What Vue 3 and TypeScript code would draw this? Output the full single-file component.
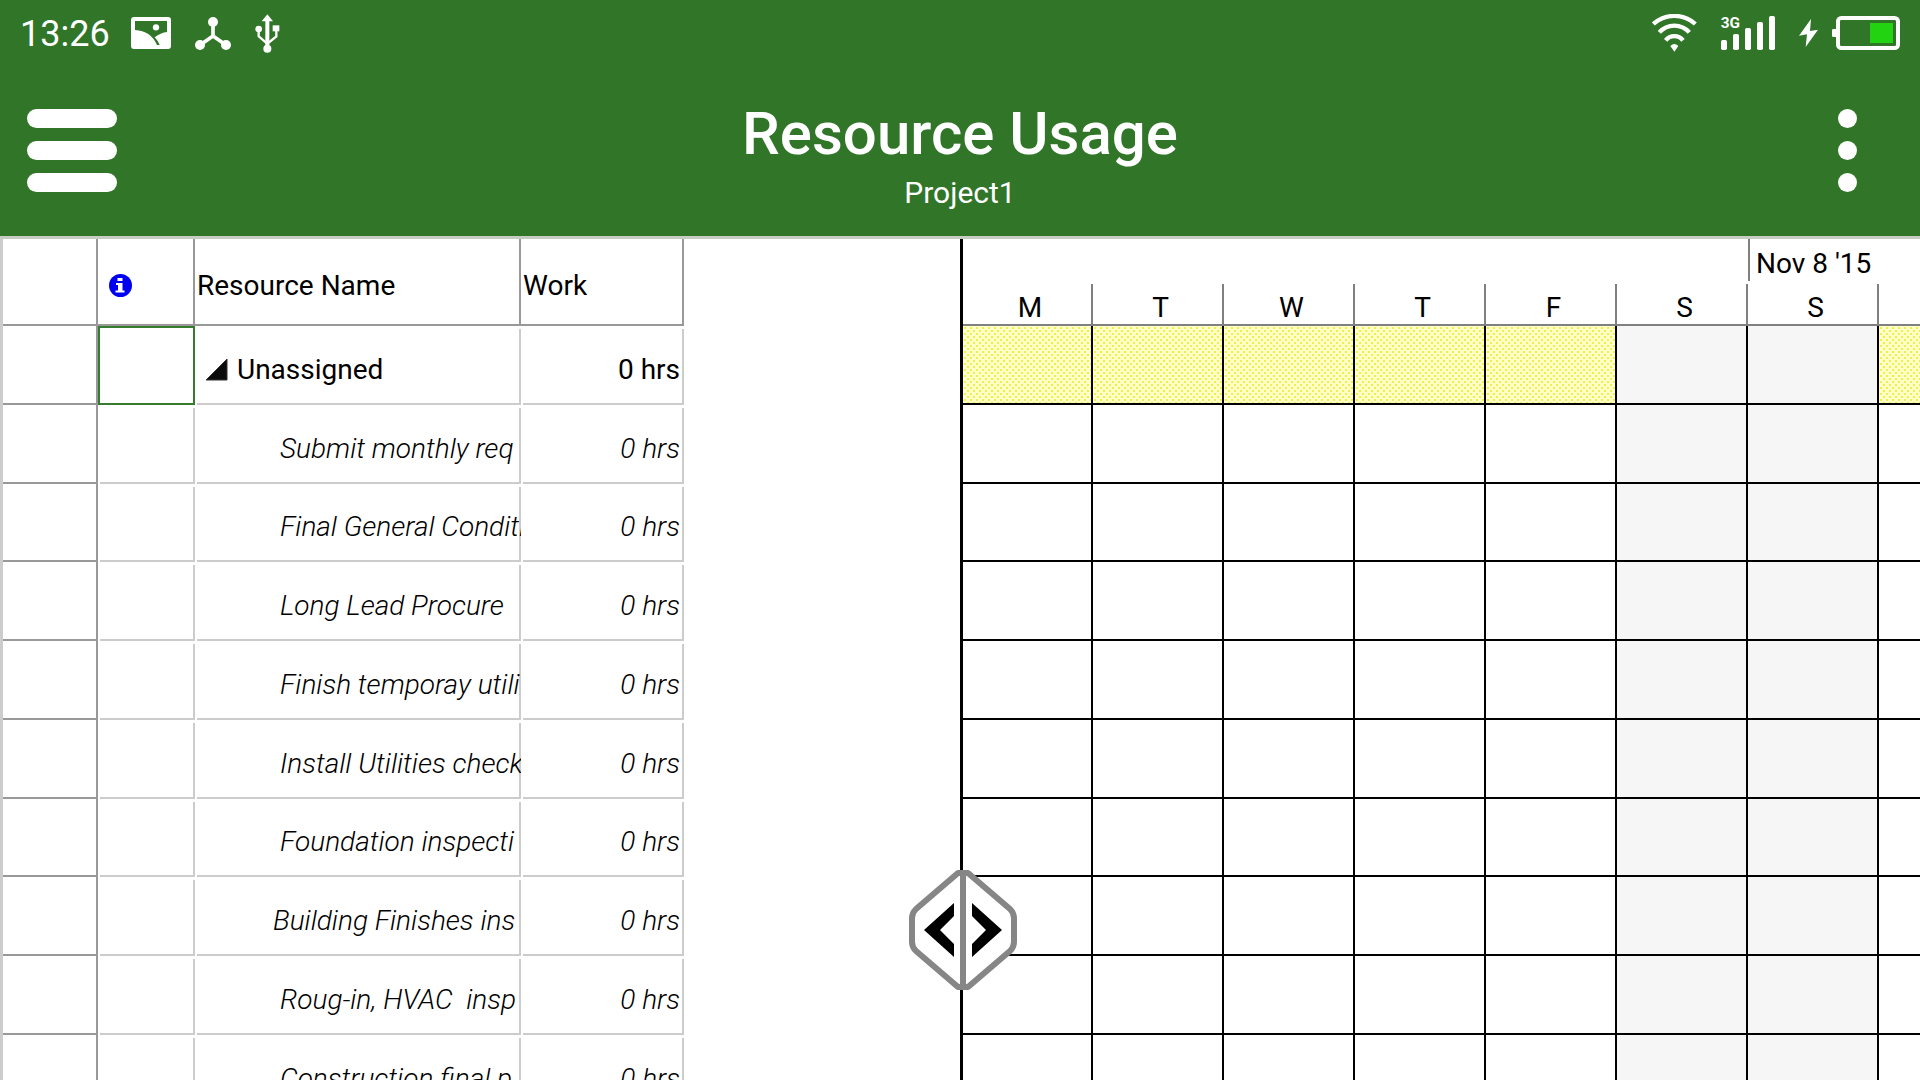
<script setup lang="ts">
interface Assignment {
  name: string
  work: string
  parent?: boolean
  wide?: boolean
}

const rows: Assignment[] = [
  { name: 'Unassigned', work: '0 hrs', parent: true },
  { name: 'Submit monthly req', work: '0 hrs' },
  { name: 'Final General Conditi', work: '0 hrs' },
  { name: 'Long Lead Procure', work: '0 hrs' },
  { name: 'Finish temporay utili', work: '0 hrs' },
  { name: 'Install Utilities checko', work: '0 hrs' },
  { name: 'Foundation inspecti', work: '0 hrs' },
  { name: 'Building Finishes ins', work: '0 hrs', wide: true },
  { name: 'Roug-in, HVAC  insp', work: '0 hrs' },
  { name: 'Construction final p', work: '0 hrs' },
]

const days: string[] = ['M', 'T', 'W', 'T', 'F', 'S', 'S', '']
const isWeekend = (index: number): boolean => index === 5 || index === 6
</script>

<template>
  <div class="app">
    <header class="top">
      <div class="status">
        <time class="clock">13:26</time>
        <svg class="icon" width="40" height="32" viewBox="393 51 120 96" aria-hidden="true">
          <rect x="393" y="51" width="120" height="96" rx="9" fill="#fff" />
          <path d="M405 63H501V96Q482 98 464 112Q473 121 479 135H471Q452 92 405 90Z" fill="#307528" />
          <circle cx="468" cy="82" r="9.5" fill="#fff" />
        </svg>
        <svg class="icon" width="36" height="33" viewBox="585 48 108 99" aria-hidden="true">
          <path d="M639 63V105L600 132M639 105L678 132" fill="none" stroke="#fff" stroke-width="11" />
          <g fill="#fff"><circle cx="639" cy="63" r="15" /><circle cx="600" cy="132" r="15" /><circle cx="678" cy="132" r="15" /></g>
        </svg>
        <svg class="icon" width="25" height="39" viewBox="764 41 75 117" aria-hidden="true">
          <path d="M801 60V140" stroke="#fff" stroke-width="12" />
          <path d="M775 86V108L801 130L828 108V88" fill="none" stroke="#fff" stroke-width="7" />
          <path d="M801 42L818 63H784Z" fill="#fff" />
          <circle cx="801" cy="145" r="12" fill="#fff" /><circle cx="775" cy="86" r="10" fill="#fff" />
          <rect x="817" y="75" width="20" height="18" fill="#fff" />
        </svg>
        <span class="spacer"></span>
        <svg class="icon" width="45" height="38" viewBox="98 42 135 114" aria-hidden="true">
          <g fill="none" stroke="#fff" stroke-width="13">
            <path d="M102 72A94 94 0 0 1 228 72" />
            <path d="M120 97A60 60 0 0 1 210 97" />
            <path d="M139 121A33 33 0 0 1 191 121" />
          </g>
          <path d="M153 138Q165 126 177 138L165 155Z" fill="#fff" />
        </svg>
        <svg class="icon signal" width="54" height="34" viewBox="303 48 162 102" aria-hidden="true">
          <text x="302" y="83" class="network">3G</text>
          <g fill="#fff">
            <rect x="303" y="120" width="18" height="30" rx="5" />
            <rect x="339" y="102" width="18" height="48" rx="5" />
            <rect x="375" y="84" width="18" height="66" rx="5" />
            <rect x="411" y="66" width="18" height="84" rx="5" />
            <rect x="447" y="48" width="18" height="102" rx="5" />
          </g>
        </svg>
        <span class="power">
          <svg width="19" height="28" viewBox="537 57 57 84" aria-hidden="true">
            <path d="M573 57L537 107L561 103L557 141L594 89L570 93Z" fill="#fff" />
          </svg>
          <svg width="68" height="34" viewBox="636 48 204 102" aria-hidden="true">
            <rect x="636" y="87" width="14" height="24" rx="4" fill="#fff" />
            <rect x="654" y="54" width="180" height="90" rx="10" fill="none" stroke="#fff" stroke-width="12" />
            <rect x="750" y="69" width="69" height="60" fill="#22d312" />
          </svg>
        </span>
      </div>
      <div class="bar">
        <button class="menu" type="button" aria-label="Menu"><i></i><i></i><i></i></button>
        <div class="titles">
          <h1>Resource Usage</h1>
          <p>Project1</p>
        </div>
        <button class="menu more" type="button" aria-label="More options"><i></i><i></i><i></i></button>
      </div>
    </header>

    <main class="workspace">
      <section class="sheet">
        <table class="resources">
          <colgroup>
            <col class="c-row" /><col class="c-info" /><col class="c-name" /><col class="c-work" />
          </colgroup>
          <thead>
            <tr>
              <th></th>
              <th>
                <svg class="info" width="23" height="23" viewBox="0 0 23 23" role="img" aria-label="Indicators">
                  <circle cx="11.5" cy="11.5" r="11.5" fill="#0000f0" />
                  <path d="M8.500 4h5v3h-5zM7 9h6.500v7.500h2v2h-9v-2h2.500v-5.500h-2z" fill="#fff" />
                </svg>
              </th>
              <th>Resource Name</th>
              <th>Work</th>
            </tr>
          </thead>
          <tbody>
            <tr v-for="(row, r) in rows" :key="row.name" :class="{ parent: row.parent }">
              <td class="row-head"></td>
              <td :class="{ selected: r === 0 }"></td>
              <td class="name" :class="{ wide: row.wide }">
                <svg v-if="row.parent" class="toggle" width="23" height="23" viewBox="0 0 23 23" aria-hidden="true">
                  <path d="M22 1V22H1Z" fill="#0c0c0c" stroke="#333" stroke-width="1" />
                </svg>{{ row.name }}
              </td>
              <td class="work">{{ row.work }}</td>
            </tr>
          </tbody>
        </table>
      </section>

      <section class="chart">
        <table class="timeline">
          <colgroup>
            <col class="d-first" /><col v-for="n in 6" :key="n" class="d-day" /><col />
          </colgroup>
          <thead>
            <tr class="weeks">
              <th colspan="6"></th>
              <th colspan="2" class="week">Nov 8 '15</th>
            </tr>
            <tr class="days">
              <th v-for="(day, d) in days" :key="d">{{ day }}</th>
            </tr>
          </thead>
          <tbody>
            <tr v-for="(row, r) in rows" :key="row.name">
              <td
                v-for="(day, d) in days"
                :key="d"
                :class="{ weekend: isWeekend(d), load: r === 0 && !isWeekend(d) }"
              ></td>
            </tr>
          </tbody>
        </table>
        <button class="splitter" type="button" aria-label="Resize panes">
          <svg width="108" height="120" viewBox="0 0 108 120">
            <path
              d="M49 3H59L101 39Q105 43 105 48V72Q105 77 101 81L59 117H49L7 81Q3 77 3 72V48Q3 43 7 39Z"
              fill="#fff" stroke="#868686" stroke-width="6" stroke-linejoin="round"
            />
            <path d="M54 4V116" stroke="#868686" stroke-width="6" />
            <path d="M45 33V46L31 60L45 74V87L15 60Z" fill="#000" />
            <path d="M63 33V46L77 60L63 74V87L93 60Z" fill="#000" />
          </svg>
        </button>
      </section>
    </main>
  </div>
</template>

<style>
body {
  margin: 0;
  overflow: hidden;
}
</style>

<style scoped>
.app {
  display: flex;
  flex-direction: column;
  height: 100vh;
  overflow: hidden;
  background: #fff;
  color: #000;
  font-family: Roboto, "Noto Sans", sans-serif;
  font-size: 28px;
}

.top {
  flex: none;
  background: #307528;
  border-bottom: 3px solid #c6cdc2;
  color: #fff;
}

.status {
  display: flex;
  align-items: center;
  gap: 24px;
  height: 66px;
  padding: 0 20px;
  box-sizing: border-box;
}

.clock {
  width: 87px;
  padding-top: 2px;
  font-size: 36px;
  line-height: 42px;
}

.icon {
  flex: none;
}

.spacer {
  flex: 1;
}

.signal {
  overflow: visible;
}

.network {
  font-size: 46px;
  font-weight: 700;
  fill: #fff;
}

.power {
  display: flex;
  align-items: center;
  gap: 14px;
}

.bar {
  display: flex;
  align-items: center;
  justify-content: space-between;
  height: 170px;
  padding: 0 27px 2px;
  box-sizing: border-box;
}

.menu {
  display: flex;
  flex-direction: column;
  gap: 13px;
  width: 90px;
  padding: 0;
  border: 0;
  background: none;
}

.menu i {
  display: block;
  width: 90px;
  height: 19px;
  border-radius: 10px;
  background: #fff;
}

.more {
  align-items: flex-end;
  padding-right: 36px;
  box-sizing: border-box;
}

.more i {
  width: 19px;
}

.titles {
  padding-top: 8px;
  text-align: center;
}

h1 {
  margin: 0 0 6px;
  font-size: 60px;
  line-height: 70px;
  font-weight: 500;
}

p {
  margin: 0;
  font-size: 30px;
  line-height: 35px;
}

.workspace {
  flex: 1;
  display: flex;
  min-height: 0;
}

.sheet,
.chart {
  flex: 1 1 0;
  min-width: 0;
  box-sizing: border-box;
}

.sheet {
  overflow: hidden;
  border-left: 3px solid #ccc;
}

.chart {
  position: relative;
  border-left: 3px solid #000;
}

table {
  table-layout: fixed;
  border-collapse: separate;
  border-spacing: 0;
}

th,
td {
  box-sizing: border-box;
  overflow: hidden;
  white-space: pre;
  text-align: left;
  vertical-align: middle;
  font-weight: 400;
  line-height: 34px;
}

tbody tr {
  height: 79px;
}

tbody tr:nth-child(4n + 3) {
  height: 78px;
}

.resources {
  width: 681px;
}

.c-row {
  width: 95px;
}

.c-info {
  width: 97px;
}

.c-name {
  width: 326px;
}

.c-work {
  width: 163px;
}

.resources th {
  height: 87px;
  padding: 8px 0 0 2px;
  border-right: 2px solid #999;
  border-bottom: 2px solid #999;
}

.info {
  display: block;
  margin-left: 9px;
}

.resources td {
  padding: 8px 0 0;
  font-style: italic;
  font-weight: 350;
  background:
    linear-gradient(#ccc, #ccc) right bottom / 2px calc(100% - 3px) no-repeat,
    linear-gradient(#ccc, #ccc) right bottom / calc(100% - 2px) 2px no-repeat;
}

.resources .row-head {
  background: none;
  border-right: 2px solid #999;
  border-bottom: 2px solid #999;
}

.resources .selected {
  background: none;
  border: 2px solid #367c2f;
}

.resources .parent td {
  font-style: normal;
  font-weight: 400;
}

.resources .name {
  padding-left: 85px;
}

.resources .wide {
  padding-left: 78px;
}

.resources .parent .name {
  padding-left: 10px;
}

.toggle {
  margin-right: 9px;
  vertical-align: -2px;
}

.resources .work {
  padding-right: 4px;
  text-align: right;
}

.timeline {
  width: 100%;
}

.d-first {
  width: 130px;
}

.d-day {
  width: 131px;
}

.timeline th {
  padding: 0;
}

.weeks th {
  height: 43px;
}

.timeline .week {
  padding: 6px 0 0 8px;
  background: linear-gradient(#808080, #808080) left top / 2px 42px no-repeat;
}

.timeline .days th {
  height: 44px;
  padding: 10px 0 0 4px;
  line-height: 32px;
  text-align: center;
  border-bottom: 2px solid #808080;
  background: linear-gradient(#808080, #808080) right bottom / 2px calc(100% - 2px) no-repeat;
}

.timeline .days th:last-child {
  background: none;
}

.timeline td {
  padding: 0;
  border-right: 2px solid #000;
  border-bottom: 2px solid #000;
}

.weekend {
  background: #f6f6f6;
}

.load {
  background:
    radial-gradient(circle at 2px 2px, #eff050 1px, transparent 1px) 0 0 / 6px 6px,
    radial-gradient(circle at 5px 5px, #eff050 1px, transparent 1px) 0 0 / 6px 6px,
    #ffffc6;
}

.timeline td:last-child {
  border-right: 0;
}

.splitter {
  position: absolute;
  top: 75%;
  left: 0;
  padding: 0;
  border: 0;
  background: none;
  transform: translateX(-50%);
}

.splitter svg {
  display: block;
}
</style>
